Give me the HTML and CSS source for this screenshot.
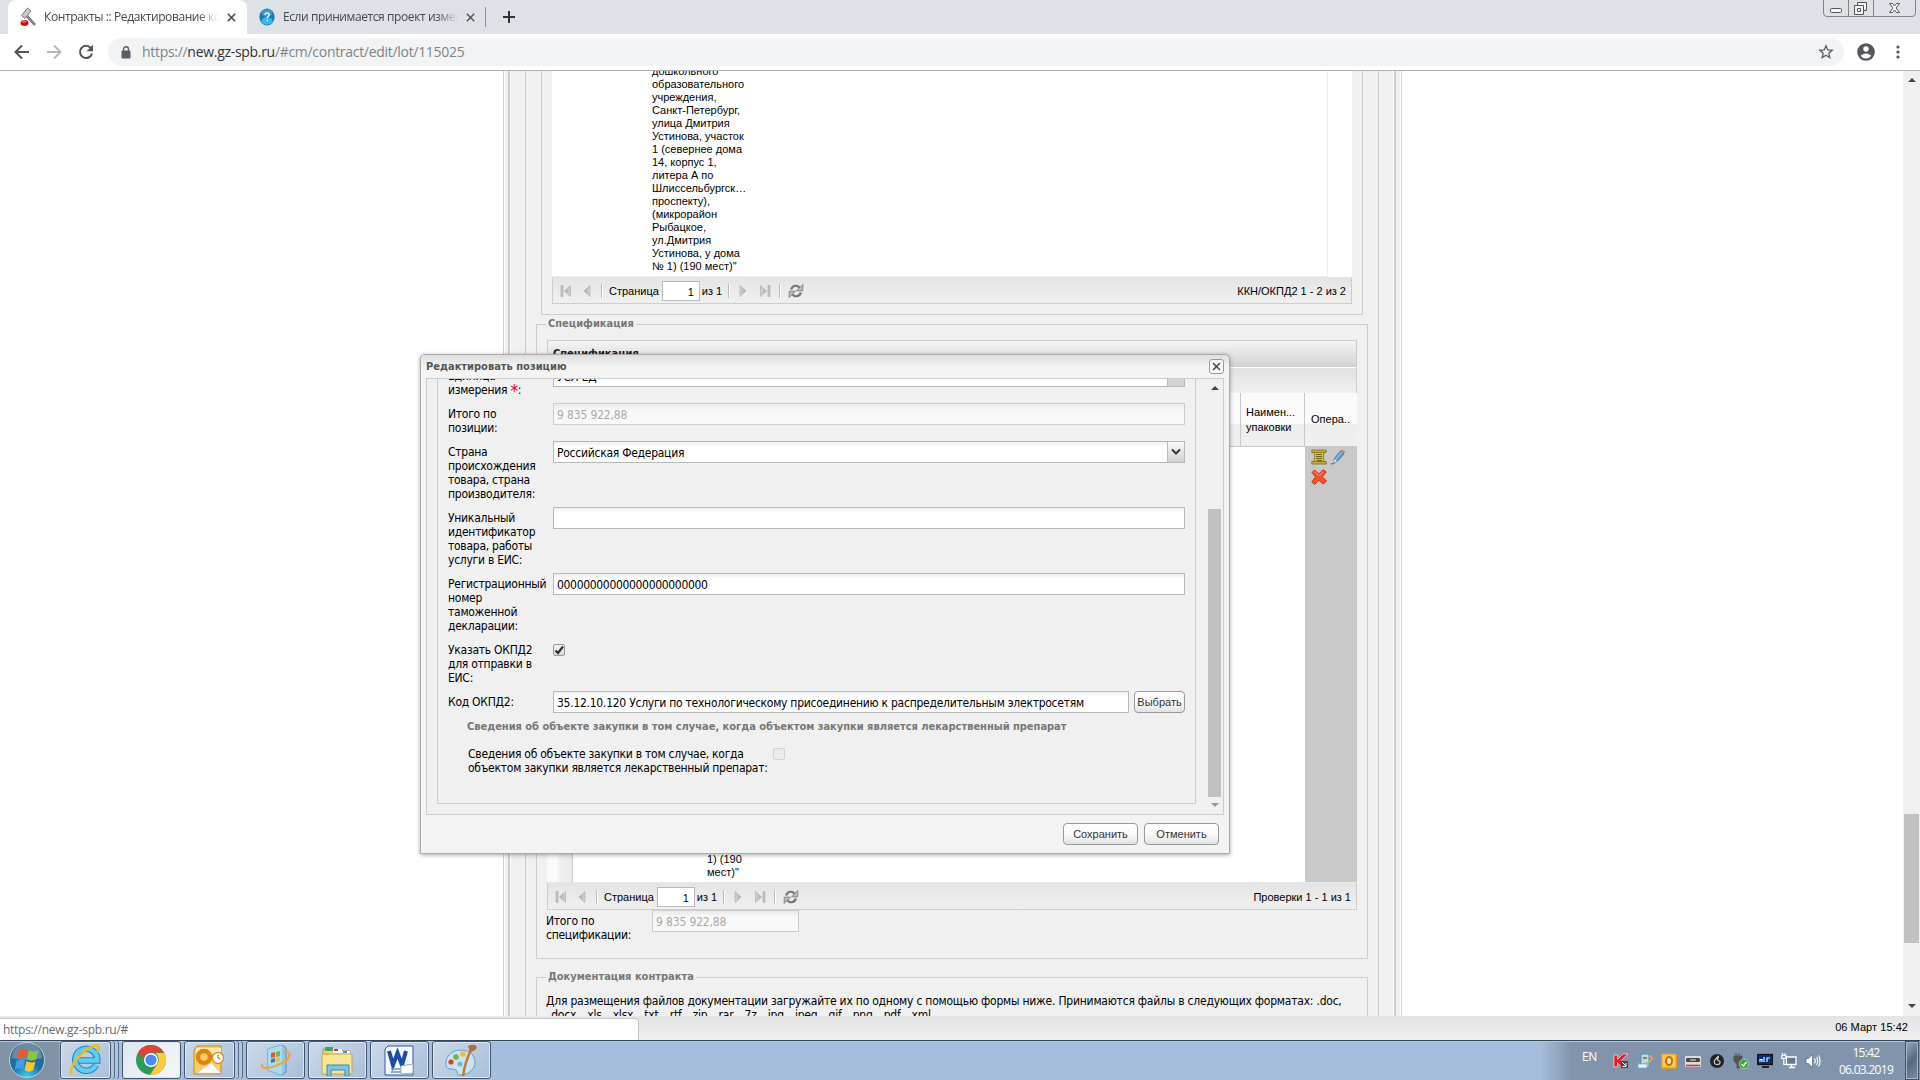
FILE: index.html
```html
<!DOCTYPE html>
<html lang="ru">
<head>
	<meta charset="UTF-8">
	<title>Контракты :: Редактирование контракта</title>
	<link rel="stylesheet" href="styles.css">
</head>
<body>
	<!-- icons used more than once -->
	<svg class="defs">
		<linearGradient id="gArrow" x1="0" y1="0" x2="1" y2="0"><stop offset="0" stop-color="#aaa"/><stop offset="1" stop-color="#d4d4d4"/></linearGradient>
		<symbol id="first" viewBox="0 0 16 16"><path d="M3 2.500h2v11H3z" fill="#c4c4c4" stroke="#aaa" stroke-width=".6"/><path d="M12.500 2.500v11L6.500 8z" fill="url(#gArrow)" stroke="#aaa" stroke-width=".6"/></symbol>
		<symbol id="prev" viewBox="0 0 16 16"><path d="M11 2.500v11L5 8z" fill="url(#gArrow)" stroke="#aaa" stroke-width=".6"/></symbol>
		<symbol id="refresh" viewBox="0 0 16 16"><g fill="none" stroke="#777" stroke-width="2.200"><path d="M3 6.500C5 1.500 10 1.800 12 5.500"/><path d="M13 9.500C11 14.500 6 14.200 4 10.500"/></g><path d="M14.800 1.500v6.300H8.600z M1.200 14.500V8.200h6.200z" fill="#bbb" stroke="#777" stroke-width=".8"/></symbol>
	</svg>

	<div class="tabs">
		<div class="tab active">
			<svg width="16" height="20" viewBox="0 0 16 20"><path d="M6 8l9 10" stroke="#555" stroke-width="2.600"/><path d="M6 8l9 10" stroke="#bbb" stroke-width="1"/><path d="M1.500 8.500L7.500 1l3.500 3-6 7.500z" fill="#c9c9c9" stroke="#777"/><ellipse cx="4.500" cy="16" rx="4" ry="3" fill="#c11"/><ellipse cx="4" cy="14.500" rx="2.500" ry="1" fill="#e77"/></svg>
			<span class="tab-title">Контракты :: Редактирование контракта</span>
			<svg width="9" height="9" viewBox="0 0 9 9"><path d="M.8.8l7.400 7.400M8.200.8L.8 8.200" stroke="#444" stroke-width="1.500"/></svg>
		</div>
		<div class="tab">
			<svg width="16" height="18" viewBox="0 0 16 18"><ellipse cx="8" cy="9" rx="7.600" ry="8.600" fill="#1379b8"/><ellipse cx="8" cy="13" rx="5.500" ry="3.800" fill="#35b9ea"/><ellipse cx="8" cy="5" rx="5.500" ry="3.800" fill="#4296c9"/><path d="M6 7c0-3 4.500-2.600 4.200-.2C10 8.300 8.200 8.200 8.200 10.300M8.200 11.800v1.400" fill="none" stroke="#fff" stroke-width="1.300"/></svg>
			<span class="tab-title">Если принимается проект изменений</span>
			<svg width="9" height="9" viewBox="0 0 9 9"><path d="M.8.8l7.400 7.400M8.200.8L.8 8.200" stroke="#555" stroke-width="1.500"/></svg>
		</div>
		<svg class="plus" width="12" height="12" viewBox="0 0 12 12"><path d="M6 0v12M0 6h12" stroke="#333" stroke-width="2"/></svg>
		<svg class="winbtns" width="94" height="17" viewBox="0 0 94 17"><path d="M.5 0v13q0 3.500 3.500 3.500h85q3.500 0 3.500-3.500V0M25.500 0v16M50.500 0v16" fill="none" stroke="#808388"/><g fill="#f4f5f6" stroke="#555"><rect x="7.500" y="8.500" width="11" height="4" rx="1"/><path d="M34.500 2.500h9v8h-9z"/><path d="M31.500 5.500h9v9h-9z"/><path d="M34.500 8.500h3v3h-3z"/><path d="M66.500 3.500h3l2 2.500 2-2.500h3l-3.300 4.500 3.300 4.500h-3l-2-2.500-2 2.500h-3L69.800 8z"/></g></svg>
	</div>
	<div class="toolbar">
		<svg width="16" height="16" viewBox="0 0 16 16"><path d="M15 8H2M8 1.500L1.500 8 8 14.500" fill="none" stroke="#505357" stroke-width="2"/></svg>
		<svg width="16" height="16" viewBox="0 0 16 16"><path d="M1 8h13M8 1.500L14.500 8 8 14.500" fill="none" stroke="#b6b8ba" stroke-width="2"/></svg>
		<svg width="16" height="16" viewBox="0 0 16 16"><path d="M12.800 4A6.100 6.100 0 1 0 14 9.500" fill="none" stroke="#505357" stroke-width="2"/><path d="M15 .8v6.400H8.600z" fill="#505357"/></svg>
		<div class="omnibox">
			<svg width="10" height="13" viewBox="0 0 10 13"><rect x=".5" y="4.500" width="9" height="8" rx="1" fill="#5a5d61"/><path d="M2.500 5V3.200a2.500 2.500 0 0 1 5 0V5" fill="none" stroke="#5a5d61" stroke-width="1.400"/></svg>
			<span class="url">https://<b>new.gz-spb.ru</b>/#cm/contract/edit/lot/115025</span>
			<svg width="16" height="16" viewBox="0 0 16 16"><path d="M8 1.800l1.700 4.100 4.500.4-3.400 2.900 1 4.400L8 11.300l-3.800 2.300 1-4.400L1.800 6.300l4.500-.4z" fill="none" stroke="#5a5d61" stroke-width="1.300"/></svg>
		</div>
		<svg class="avatar" width="18" height="18" viewBox="0 0 18 18"><circle cx="9" cy="9" r="8.800" fill="#54575b"/><circle cx="9" cy="6" r="2.700" fill="#fff"/><path d="M3.700 12.700q5.300-4.200 10.600 0-2 2.900-5.300 2.900t-5.300-2.900z" fill="#fff"/></svg>
		<svg width="4" height="14" viewBox="0 0 4 14" fill="#54575b"><circle cx="2" cy="2" r="1.600"/><circle cx="2" cy="7" r="1.600"/><circle cx="2" cy="12" r="1.600"/></svg>
	</div>

	<div class="content">
		<div class="frame"><div class="frame-in"><div class="area">
			<div class="okpd">
				<div class="okpd-body"><div class="okpd-row">дошкольного
образовательного
учреждения,
Санкт-Петербург,
улица Дмитрия
Устинова, участок
1 (севернее дома
14, корпус 1,
литера А по
Шлиссельбургск…
проспекту),
(микрорайон
Рыбацкое,
ул.Дмитрия
Устинова, у дома
№ 1) (190 мест)"</div></div>
				<div class="pager">
					<svg class="first"><use href="#first"/></svg><svg class="prev"><use href="#prev"/></svg><i></i>
					<span>Страница</span><div class="page-no">1</div><span>из 1</span><i></i>
					<svg class="next"><use href="#prev"/></svg><svg class="last"><use href="#first"/></svg><i></i>
					<svg class="refresh"><use href="#refresh"/></svg>
					<span class="total">ККН/ОКПД2 1 - 2 из 2</span>
				</div>
			</div>

			<fieldset class="spec">
				<legend>Спецификация</legend>
				<div class="grid">
					<div class="grid-title">Спецификация</div>
					<div class="grid-tbar"></div>
					<div class="grid-head">
						<div class="col-rest"></div>
						<div class="col-pack">Наимен...<br>упаковки</div>
						<div class="col-oper">Опера..</div>
					</div>
					<div class="grid-body">
						<div class="rownum"></div>
						<div class="col-name">1) (190<br>мест)"</div>
						<div class="ops">
							<svg width="16" height="16" viewBox="0 0 16 16"><path d="M3 3h10l-.6 5 .6 5H3l.6-5z" fill="#dcc544" stroke="#7c6a10" stroke-width=".8"/><path d="M.8 1h14.400v2.400H.8zM.8 12.600h14.400V15H.8z" fill="#cdb335" stroke="#7c6a10" stroke-width=".8"/><path d="M5 5.500h6M5 7.500h6M5 9.500h6M6 11.500h5" stroke="#5c5318" stroke-width=".9"/></svg>
							<svg width="16" height="16" viewBox="0 0 16 16"><path d="M4 10L10.500 2l3.500 2.800L7.300 12.500 3.500 14z" fill="#5b9ed2" stroke="#35648f" stroke-width=".7"/><path d="M5.500 10.500L12 3" stroke="#b6dcf5"/><path d="M10.500 2L12 .6l3.200 2.400L14 4.800z" fill="#d0785e"/><path d="M4 10l3.300 2.500L3.300 14z" fill="#f0dba8"/><path d="M.5 15q2.500-.2 4.500-1" fill="none" stroke="#3b95c8" stroke-width="1.300"/></svg>
							<svg width="16" height="16" viewBox="0 0 16 16"><path d="M3.500 1L8 5l4-4.300L15.300 3l-4 4.800L15.500 12l-3.300 3L8 11.300 3.500 15.500.7 13 4.500 8 1 3.500z" fill="#f4532d" stroke="#c22b12" stroke-width=".9"/><path d="M3.500 2.500L8 6.500l4-4" fill="none" stroke="#ff9a78"/></svg>
						</div>
					</div>
					<div class="pager">
						<svg class="first"><use href="#first"/></svg><svg class="prev"><use href="#prev"/></svg><i></i>
						<span>Страница</span><div class="page-no">1</div><span>из 1</span><i></i>
						<svg class="next"><use href="#prev"/></svg><svg class="last"><use href="#first"/></svg><i></i>
						<svg class="refresh"><use href="#refresh"/></svg>
						<span class="total">Проверки 1 - 1 из 1</span>
					</div>
				</div>
				<div class="sum">
					<label>Итого по<br>спецификации:</label>
					<div class="input disabled">9 835 922,88</div>
				</div>
			</fieldset>

			<fieldset class="docs">
				<legend>Документация контракта</legend>
				<p>Для размещения файлов документации загружайте их по одному с помощью формы ниже. Принимаются файлы в следующих форматах: .doc,<br><span class="ext">.docx, .xls, .xlsx, .txt, .rtf, .zip, .rar, .7z, .jpg, .jpeg, .gif, .png, .pdf, .xml</span></p>
			</fieldset>
		</div></div></div>
		<div class="scroll">
			<div class="up"></div><div class="thumb"></div><div class="down"></div>
		</div>
	</div>

	<div class="statusbar">
		<div class="link">https://new.gz-spb.ru/#</div>
		<span>06 Март 15:42</span>
	</div>

	<div class="taskbar">
		<div class="start"><svg width="38" height="38" viewBox="0 0 38 38"><defs><radialGradient id="orb" cx=".5" cy="1" r=".9"><stop offset="0" stop-color="#3fd4f5"/><stop offset=".5" stop-color="#1b6ea8"/><stop offset="1" stop-color="#3d6482"/></radialGradient></defs><circle cx="19" cy="19" r="17.500" fill="url(#orb)" stroke="#b9d3e3"/><path d="M4 17a15 15 0 0 1 30 0q-15 4-30 0z" fill="#fff" opacity=".25"/><path d="M11 9.500q4-3 8.500-.5l-2 9q-4-2.500-8.500.5z" fill="#ea5a2a"/><path d="M21 9.500q4.500 2.500 9.500-.5l-2.500 9.500q-4.500 2.500-9-.5z" fill="#8cc63f"/><path d="M8.500 20q4.500-3 8.500-.5l-2 9q-4-2.500-8.500.5z" fill="#3fa0e0"/><path d="M18.500 20q4.500 2.500 9 .5l-2.500 9q-4.500 2.500-8.500-.5z" fill="#fdc52c"/></svg></div>
		<div class="task stack ie"><svg width="32" height="32" viewBox="0 0 32 32"><path d="M27 21a11 11 0 1 1 1.300-4.500H10" fill="none" stroke="#1a86c4" stroke-width="6.500"/><path d="M27 21a11 11 0 1 1 1.300-4.500H10" fill="none" stroke="#62cdf3" stroke-width="4.500"/><path d="M3 30C-3 24 20-2 29 2c2 1 1 4-1 6" fill="none" stroke="#f2b91c" stroke-width="2.500"/></svg></div>
		<div class="task current"><svg width="32" height="32" viewBox="0 0 32 32"><circle cx="16" cy="16" r="15" fill="#2b9b55"/><path d="M3 8.500A15 15 0 0 1 29 8.500H16a7.500 7.500 0 0 0-7 6z" fill="#db4437"/><path d="M29.300 9A15 15 0 0 1 15 31l7.500-11.500A7.500 7.500 0 0 0 20 9z" fill="#fdc93d"/><circle cx="16" cy="16" r="7" fill="#fff"/><circle cx="16" cy="16" r="5.600" fill="#4a8af4"/></svg></div>
		<div class="task stack outlook"><svg width="32" height="32" viewBox="0 0 32 32"><path d="M5 2h24v28H2V6z" fill="#f7cf62" stroke="#c98a14"/><path d="M4 4h25v5H4z" fill="#fdeaa8"/><circle cx="12" cy="13" r="6" fill="none" stroke="#e0830f" stroke-width="4.500"/><path d="M5 29l14-10 10 10z" fill="#fff" stroke="#ccc" stroke-width=".6"/><circle cx="26" cy="14" r="5.500" fill="#fff" stroke="#d9922b" stroke-width="1.400"/><path d="M26 10.500V14l2.500 1" fill="none" stroke="#a45c0e"/></svg></div>
		<div class="task"><svg width="32" height="32" viewBox="0 0 32 32"><path d="M9 5L23 1l4 3v24l-4 3L9 26z" fill="#8cc9ea" stroke="#4b96c4"/><path d="M9 5L23 1v30L9 26z" fill="#a9dcf4"/><path d="M12 9l4-1v5l-4 1z" fill="#e2572b"/><path d="M17 8l4-1v5l-4 1z" fill="#79b83c"/><path d="M12 15l4-1v4l-4 1z" fill="#2f7fc9"/><path d="M17 14l4-1v4l-4 1z" fill="#f2bd2c"/><path d="M24 7c10 0 8 8-3 13S1 26 3 20" fill="none" stroke="#f1a23c" stroke-width="2.200"/></svg></div>
		<div class="task"><svg width="32" height="32" viewBox="0 0 32 32"><path d="M2 5h9l2 2h16v22H2z" fill="#efd373" stroke="#b99536"/><path d="M4 3h8v4H4z" fill="#3ba55b"/><path d="M12 5h9v4h-9z" fill="#fff"/><path d="M13 5h4v2h-4z" fill="#d33"/><path d="M21 7h8v4h-8z" fill="#fff"/><path d="M22 7h4v2h-4z" fill="#39c"/><path d="M1 10h30v20H1z" fill="#f8e596" stroke="#c8a442"/><path d="M6 32V21h22v11h-4v-6H10v6z" fill="#7cc5e6" stroke="#3b86b0"/></svg></div>
		<div class="task"><svg width="32" height="32" viewBox="0 0 32 32"><path d="M5 2h25v29H2V5z" fill="#f3f7fc" stroke="#2a5ba8"/><path d="M6 7l4 14L14.500 9 19 21l4-14" fill="none" stroke="#1c4fa0" stroke-width="4"/><path d="M8 25h10M8 28h10" stroke="#6d93cb" stroke-width="1.500"/><path d="M18 22l12-2v9l-12 1z" fill="#fff" stroke="#9ab"/></svg></div>
		<div class="task"><svg width="32" height="32" viewBox="0 0 32 32"><path d="M16 6C6 6 0 13 1 21c1 6 7 3 10 5s-1 5 4 5c9 0 15-6 15-13S24 6 16 6z" fill="#c9e4f6" stroke="#5f9dc9"/><circle cx="6" cy="18" r="2.600" fill="#df3c2c"/><circle cx="11" cy="13" r="2.800" fill="#69b53c"/><circle cx="18" cy="10" r="2.800" fill="#f0bd2b"/><circle cx="15" cy="20" r="2.500" fill="#6bb8df"/><path d="M18 32q2-14 8-26" fill="none" stroke="#c47b33" stroke-width="2.600"/><path d="M23 2q7-3 9 1-1 4-7 5z" fill="#a8713c"/></svg></div>
		<div class="tray">
			<span class="lang">EN</span>
			<svg width="16" height="16" viewBox="0 0 16 16"><path d="M1 2h3.500v4.500L10 1h5L8 7.500 13 14H8L4.500 9.500V14H1z" fill="#e31b23" stroke="#fff" stroke-width=".6"/><path d="M8 8h7v7H8z" fill="#444"/><path d="M9 9l4 4M13 10v3.500H9.500" stroke="#fff" fill="none"/></svg>
			<svg width="16" height="16" viewBox="0 0 16 16"><path d="M4 1h8v13H4z" fill="#b2def4" stroke="#528fb8"/><path d="M6 4h2v2H6z" fill="#d53"/><path d="M8 4h2v2H8z" fill="#6a3"/><path d="M12 3c5 0 3 5-2 7s-9 3-9 0" fill="none" stroke="#f1a23c" stroke-width="1.600"/><path d="M1 11h9v4H1z" fill="#e7f1f8" stroke="#6ca0c0" stroke-width=".6"/></svg>
			<svg width="16" height="16" viewBox="0 0 16 16"><rect x=".7" y="1" width="14.600" height="14" rx="1" fill="#f8cc50" stroke="#e79c18" stroke-width="1.400"/><ellipse cx="8" cy="8" rx="3" ry="4" fill="#fff2c0" stroke="#c96b00" stroke-width="2"/></svg>
			<svg width="16" height="16" viewBox="0 0 16 16"><rect x="0" y="3" width="16" height="11" rx="1" fill="#ddd"/><rect x="1" y="5" width="14" height="4" rx="1.500" fill="#444"/><path d="M5 6h6v2H5z" fill="#999"/><path d="M1 12.500h14" stroke="#c23b3b" stroke-width="1.600"/></svg>
			<svg width="16" height="16" viewBox="0 0 16 16"><circle cx="8" cy="8" r="7" fill="#222"/><path d="M9.500 3L5.500 7.500q-1 4 2.500 4t3-3L8.500 7z" fill="none" stroke="#ccc" stroke-width="1.200"/></svg>
			<svg width="16" height="16" viewBox="0 0 16 16"><path d="M3 0v3M6 0v3M1 3h8v5l-2 3v4H4v-4L1 8z" fill="#555" stroke="#555"/><circle cx="11" cy="11" r="4.800" fill="#32a93a" stroke="#d9f0da" stroke-width=".6"/><path d="M8.500 11l2 2 3-4" fill="none" stroke="#fff" stroke-width="1.500"/></svg>
			<svg width="16" height="16" viewBox="0 0 16 16"><rect x=".7" y="1.500" width="14.600" height="10" fill="#0c2f75" stroke="#111" stroke-width="1.300"/><path d="M3 9V6.500h2V9M7 9V4M10 9V5h3" stroke="#dff" fill="none" stroke-width="1.200"/><path d="M5 14h7" stroke="#222" stroke-width="2"/></svg>
			<svg width="16" height="16" viewBox="0 0 16 16"><path d="M5.500 4h9.500v7.500H5.500zM8 14.500h6M10.500 12v2" fill="#66788e" stroke="#fff" stroke-width="1.300"/><path d="M1.500 0v2M4 0v2M.8 2.500h4v3h-4zM2.800 6v5.500H6" fill="none" stroke="#fff" stroke-width="1.200"/></svg>
			<svg width="16" height="16" viewBox="0 0 16 16"><path d="M1 5.500h2.500L7.500 1.500v13l-4-4H1z" fill="#fff" stroke="#44566c" stroke-width=".6"/><path d="M9.500 5.500q1.500 2.500 0 5M11.500 4q2.500 4 0 8M13.500 2.500q3.300 5.500 0 11" fill="none" stroke="#fff" stroke-width="1.100"/></svg>
			<div class="clock">15:42<br>06.03.2019</div>
			<div class="desk"></div>
		</div>
	</div>

	<div class="dialog">
		<div class="dialog-title">Редактировать позицию
			<svg width="15" height="15" viewBox="0 0 15 15"><rect x=".5" y=".5" width="14" height="14" rx="2.500" fill="#fafafa" stroke="#999"/><path d="M4 4l7 7M11 4l-7 7" stroke="#444" stroke-width="1.500"/></svg>
		</div>
		<div class="dialog-body">
			<div class="form">
				<div class="row"><label>Единица<br>измерения <em>*</em>:</label><div class="input combo">УСЛ ЕД<b class="off"></b></div></div>
				<div class="row"><label>Итого по<br>позиции:</label><div class="input disabled">9 835 922,88</div></div>
				<div class="row"><label>Страна<br>происхождения<br>товара, страна<br>производителя:</label><div class="input combo">Российская Федерация<b><svg width="10" height="8" viewBox="0 0 10 8"><path d="M1 1.500l4 4 4-4" fill="none" stroke="#333" stroke-width="2"/></svg></b></div></div>
				<div class="row"><label>Уникальный<br>идентификатор<br>товара, работы<br>услуги в ЕИС:</label><div class="input"></div></div>
				<div class="row"><label>Регистрационный<br>номер<br>таможенной<br>декларации:</label><div class="input zeros">00000000000000000000000</div></div>
				<div class="row"><label>Указать ОКПД2<br>для отправки в<br>ЕИС:</label><div class="check"><svg width="10" height="10" viewBox="0 0 10 10"><path d="M1.500 5.500l2.500 2.500 5-6.500" fill="none" stroke="#333" stroke-width="2.200"/></svg></div></div>
				<div class="row code"><label>Код ОКПД2:</label><div class="input">35.12.10.120 Услуги по технологическому присоединению к распределительным электросетям</div><button>Выбрать</button></div>
				<div class="drug-title">Сведения об объекте закупки в том случае, когда объектом закупки является лекарственный препарат</div>
				<div class="row drug"><label>Сведения об объекте закупки в том случае, когда<br>объектом закупки является лекарственный препарат:</label><div class="check off"></div></div>
			</div>
			<div class="scroll">
				<div class="up"></div><div class="thumb"></div><div class="down"></div>
			</div>
		</div>
		<div class="dialog-btns"><button>Сохранить</button><button>Отменить</button></div>
	</div>
</body>
</html>
```
FILE: styles.css
```css
*{margin: 0;padding: 0;box-sizing: border-box;}
body {
	width: 1920px;
	height: 1080px;
	overflow: hidden;
	position: relative;
	display: flex;
	flex-direction: column;
	background: #fff;
	font: 12px/14px "DejaVu Sans Condensed", "DejaVu Sans", sans-serif;
	letter-spacing: -.26px;
	color: #000;
}
svg {
	display: block;
	flex: none;
}
.defs {
	position: absolute;
	width: 0;
	height: 0;
}

/* browser */
.tabs {
	height: 34px;
	flex: none;
	display: flex;
	align-items: center;
	padding-left: 8px;
	background: #dee1e6;
	font: 12px/16px "Open Sans", sans-serif;
	letter-spacing: -.41px;
	color: #45484c;
}
.tab {
	width: 239px;
	height: 34px;
	display: flex;
	align-items: center;
	padding: 0 0 0 12px;
	border-right: 1px solid #8f9297;
	background-clip: padding-box;
}
.tab:not(.active) {
	height: 20px;
}
.tab.active {
	width: 239px;
	border: 0;
	border-radius: 8px 8px 0 0;
	background: #fff;
}
.tab-title {
	width: 175px;
	margin: 0 8px;
	white-space: nowrap;
	overflow: hidden;
	-webkit-mask: linear-gradient(90deg, #000 88%, transparent);
}
.plus {
	margin-left: 17px;
}
.winbtns {
	margin-left: auto;
	margin-right: 3px;
	align-self: flex-start;
}
.toolbar {
	height: 37px;
	flex: none;
	display: flex;
	align-items: center;
	gap: 16px;
	padding: 0 20px 0 14px;
	border-bottom: 1px solid #b2b0b2;
	background: #fff;
}
.omnibox {
	flex: 1;
	height: 28px;
	margin-left: -2px;
	display: flex;
	align-items: center;
	padding: 0 10px 0 13px;
	border-radius: 14px;
	background: #f1f3f4;
	font: 14px/20px "Open Sans", sans-serif;
	letter-spacing: -.3px;
	color: #80848a;
}
.url {
	flex: 1;
	margin-left: 11px;
}
.url b {
	font-weight: normal;
	color: #333;
}
.avatar {
	margin: 0 5px 0 -3px;
}

/* page */
.content {
	height: 945px;
	flex: none;
	display: flex;
	overflow: hidden;
}
.frame {
	width: 899px;
	margin-left: 503px;
	padding: 0 5px 0 4px;
	border: 1px solid #d2d2d2;
	border-width: 0 1px;
	background: linear-gradient(90deg, #fff 1px, #f0f0f0 1px, #f0f0f0 896px, #fff 896px);
}
.frame-in {
	height: 945px;
	border: 2px solid #ccc;
	border-width: 0 2px;
	padding: 0 15px;
	background: linear-gradient(90deg, #fff 1px, #f0f0f0 1px, #f0f0f0 883px, #fff 883px);
}
.area {
	height: 945px;
	overflow: hidden;
	border: 1px solid #ccc;
	border-width: 0 1px;
	padding: 0 10px;
}
.okpd {
	height: 244px;
	margin: 0 5px;
	padding: 0 10px 10px;
	border: 1px solid #ccc;
	border-top: 0;
}
.okpd-body {
	height: 206px;
	padding-right: 24px;
	background: #fff;
}
.okpd-row {
	height: 206px;
	padding-left: 100px;
	border: 1px solid #ececec;
	border-width: 0 1px 1px 0;
	font: 11px/13px "Liberation Sans", Arial, sans-serif;
	letter-spacing: 0;
	white-space: pre;
	overflow: hidden;
	display: flex;
	align-items: flex-end;
	padding-bottom: 3px;
}
.pager {
	height: 27px;
	display: flex;
	align-items: center;
	padding: 1px 5px 0 5px;
	border: 1px solid #ccc;
	border-top: 0;
	background: linear-gradient(#e4e4e4, #f0f0f0);
	font: 11px/14px "Liberation Sans", Arial, sans-serif;
	letter-spacing: 0;
}
.pager svg {
	width: 16px;
	height: 16px;
}
.pager .prev {
	margin-left: 5px;
}
.pager .next {
	margin-left: -1px;
	transform: scaleX(-1);
}
.pager .last {
	margin-left: 6px;
	transform: scaleX(-1);
}
.pager .refresh {
	margin-left: 7px;
}
.pager i {
	width: 2px;
	height: 14px;
	margin: 0 6px 0 6px;
	border-left: 1px solid #bbb;
	border-right: 1px solid #fff;
}
.pager i:last-of-type {
	margin-right: 0;
}
.page-no {
	width: 38px;
	height: 20px;
	margin: 0 2px 0 3px;
	padding: 3px 5px;
	border: 1px solid #bbb;
	background: #fff;
	text-align: right;
}
.pager .total {
	margin-left: auto;
}
fieldset {
	border: 1px solid #ccc;
	min-width: 0;
}
legend {
	margin-left: -1px;
	padding: 0 2px;
	font-weight: bold;
	font-size: 11px;
	line-height: 14px;
	letter-spacing: 0;
	color: #777;
}
.spec {
	height: 642px;
	margin-top: 2px;
	padding: 9px 10px 0;
}
.grid-title {
	height: 27px;
	padding: 6px 5px;
	border: 1px solid #ccc;
	background: linear-gradient(#f4f4f4, #d4d4d4);
	font-size: 11px;
	font-weight: bold;
	letter-spacing: 0;
	color: #222;
}
.grid-tbar {
	height: 26px;
	border: 1px solid #ccc;
	border-top-color: #fff;
	border-bottom: 0;
	background: linear-gradient(#e2e2e2, #f0f0f0);
}
.grid-head {
	height: 54px;
	display: flex;
	border-bottom: 1px solid #c8c8c8;
	background: linear-gradient(#fafafa 58%, #ededed 60%, #f0f0f0);
	font: 11px/15px "Liberation Sans", Arial, sans-serif;
	letter-spacing: 0;
}
.grid-head div {
	display: flex;
	align-items: center;
	border-right: 1px solid #c8c8c8;
}
.col-rest {
	width: 694px;
}
.col-pack {
	width: 64px;
	padding-left: 5px;
}
.grid-head .col-oper {
	width: 52px;
	padding-left: 6px;
	border: 0;
}
.grid-body {
	height: 436px;
	display: flex;
	background: #fff;
	border-bottom: 1px solid #e8e8e8;
	font: 11px/13px "Liberation Sans", Arial, sans-serif;
	letter-spacing: 0;
}
.rownum {
	width: 26px;
	border-right: 1px solid #ccc;
	background: linear-gradient(90deg, #fafafa 40%, #f0f1f2 50%, #e6e8ea);
}
.col-name {
	flex: 1;
	align-self: flex-end;
	padding: 0 0 3px 134px;
}
.ops {
	width: 52px;
	padding: 2px 6px;
	display: flex;
	flex-wrap: wrap;
	align-content: flex-start;
	gap: 4px 3px;
	background: #c9c9c9;
}
.sum {
	display: flex;
}
.sum label {
	width: 106px;
	margin-left: -1px;
	padding-top: 4px;
}
.sum .input {
	width: 147px;
	flex: none;
}
.docs {
	height: 120px;
	margin-top: 11px;
	padding: 10px 9px;
}
.docs p {
	white-space: nowrap;
	letter-spacing: -.22px;
}
.docs legend {
	margin-left: 0;
}
.ext {
	margin-left: 2px;
	word-spacing: 1.5px;
}

/* form fields */
.input {
	flex: 1;
	height: 22px;
	padding: 4px 3px 0;
	border: 1px solid #b8b8b8;
	background: linear-gradient(#edf0f1, #fff 5px);
	white-space: nowrap;
}
.input.disabled {
	border-color: #ccc;
	background: linear-gradient(#eaeaea, #f8f8f8 6px);
	color: #aaa;
	letter-spacing: -.15px;
}
.combo {
	display: flex;
	padding-right: 0;
}
.combo b {
	width: 17px;
	height: 20px;
	margin: -4px 0 0 auto;
	display: flex;
	align-items: center;
	justify-content: center;
	border-left: 1px solid #bbb;
	background: linear-gradient(#fafafa, #d0d0d0);
}
.combo b.off {
	background: #d4d4d4;
}
.check {
	width: 12px;
	height: 12px;
	margin-top: 5px;
	border: 1px solid #999;
	border-radius: 2px;
	background: linear-gradient(#f4f4f4, #ddd);
}
.check.off {
	border-color: #d4d4d4;
	background: #ebebeb;
}
button {
	height: 22px;
	border: 1px solid #999;
	border-radius: 4px;
	background: linear-gradient(#fff, #fafafa 50%, #e2e2e4);
	font: 11px "Liberation Sans", Arial, sans-serif;
	color: #333;
}

/* dialog */
.dialog {
	position: absolute;
	left: 420px;
	top: 354px;
	width: 810px;
	height: 500px;
	padding: 0 5px;
	border: 1px solid #aaa;
	border-radius: 5px 5px 0 0;
	background: #f3f3f3;
	box-shadow: 0 1px 4px rgba(0,0,0,.35);
}
.dialog-title {
	height: 23px;
	display: flex;
	align-items: center;
	justify-content: space-between;
	margin: 0 -5px;
	padding: 0 5px;
	border-radius: 5px 5px 0 0;
	background: linear-gradient(#dedede, #f4f4f4 12px);
	font-size: 11px;
	font-weight: bold;
	letter-spacing: 0;
	color: #555;
}
.dialog-body {
	height: 437px;
	display: flex;
	justify-content: space-between;
	overflow: hidden;
	padding-left: 10px;
	border: 1px solid #ccc;
	background: #f0f0f0;
}
.form {
	width: 759px;
	height: 439px;
	margin-top: -14px;
	padding: 0 10px;
	border: 1px solid #ccc;
	border-top: 0;
}
.row {
	display: flex;
	padding-bottom: 6px;
}
.row label {
	width: 105px;
	padding-top: 4px;
	white-space: nowrap;
}
.row em {
	font-style: normal;
	font-size: 17px;
	line-height: 10px;
	vertical-align: -3px;
	color: #e00;
}
.zeros {
	letter-spacing: -.32px;
}
.code button {
	width: 51px;
	margin-left: 5px;
}
.drug-title {
	margin: 1px 0 9px 19px;
	font-size: 11px;
	font-weight: bold;
	letter-spacing: -.02px;
	color: #777;
}
.drug {
	padding-left: 20px;
}
.drug label {
	width: 305px;
}
.dialog-btns {
	display: flex;
	justify-content: flex-end;
	gap: 6px;
	padding: 8px 5px;
}
.dialog-btns button {
	width: 75px;
}

/* scrollbars */
.scroll {
	width: 17px;
	display: flex;
	flex-direction: column;
	align-items: center;
	background: #f0f0f0;
}
.content .scroll {
	margin-left: auto;
}
.up, .down {
	border: 4px solid transparent;
	border-top: 0;
	border-bottom: 4px solid #444;
	margin-top: 7px;
}
.down {
	transform: scaleY(-1);
	margin: auto 0 8px;
}
.thumb {
	width: 15px;
	height: 129px;
	margin-top: 732px;
	background: #c1c1c1;
}
.dialog .thumb {
	width: 13px;
	height: 288px;
	margin-top: 119px;
}
.dialog .down {
	margin-bottom: 7px;
	border-bottom-color: #999;
}

/* bottom */
.statusbar {
	height: 24px;
	flex: none;
	display: flex;
	justify-content: space-between;
	align-items: center;
	padding-right: 12px;
	background: linear-gradient(#e4e4e4, #efefef);
	font: 11px/14px "Liberation Sans", Arial, sans-serif;
	letter-spacing: .05px;
}
.statusbar span {
	margin-top: -2px;
}
.link {
	width: 639px;
	height: 22px;
	margin-top: 2px;
	padding: 2px 3px;
	border: 1px solid #c4c4c4;
	border-width: 1px 1px 0 0;
	border-radius: 0 4px 0 0;
	background: #fff;
	font: 12px/17px "Open Sans", sans-serif;
	letter-spacing: -.28px;
	color: #6a6d70;
}
.taskbar {
	height: 40px;
	flex: none;
	display: flex;
	border-top: 1px solid #34465a;
	background: linear-gradient(90deg, #8293a8 58px, #a5bedb 62px, #a5bedb 1540px, #8294ab 1572px);
	box-shadow: inset 0 1px #b4c6da;
}
.start {
	width: 60px;
	padding: 0 8px;
}
.task {
	width: 59px;
	height: 38px;
	margin-right: 3px;
	padding-right: 1px;
	display: flex;
	align-items: center;
	justify-content: center;
	border: 1px solid #44566f;
	border-radius: 3px;
	background: linear-gradient(135deg, #cbd9e9, #a9bfd9);
	box-shadow: inset 0 0 0 1px #dde8f4;
}
.current {
	background: linear-gradient(135deg, #dfe6ee, #f4f8fc);
}
.stack {
	width: 51px;
	margin-right: 11px;
	box-shadow: inset 0 0 0 1px #dde8f4, 3px 0 #b0c5de, 4px 0 #566a85, 7px 0 #b0c5de, 8px 0 #566a85;
}
.outlook {
	padding-right: 4px;
}
.tray {
	margin-left: auto;
	display: flex;
	align-items: center;
	gap: 8px;
	font: 12px/17px "Open Sans", sans-serif;
	letter-spacing: -.7px;
	color: #fff;
}
.lang {
	margin: -8px 8px 0 0;
	letter-spacing: -.3px;
}
.clock {
	width: 62px;
	margin-left: 6px;
	text-align: center;
}
.desk {
	width: 14px;
	height: 39px;
	margin-right: 1px;
	border: 1px solid #43546a;
	background: linear-gradient(135deg, #9aabbd, #55687e 50%, #7d90a6);
	box-shadow: inset 0 0 0 1px #a6b5c6;
}
```
